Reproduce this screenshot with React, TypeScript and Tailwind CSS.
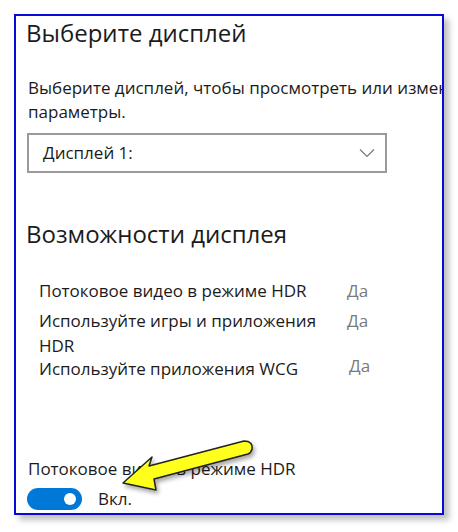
export default function App() {
  return (
    <div className="w-[458px] h-[532px] bg-white relative" style={{ fontFamily: '"Open Sans", "Noto Sans", sans-serif' }}>
      <div className="absolute left-[14px] top-[14px] w-[430px] h-[501px] border-[2.5px] border-[#0a0ad8] bg-white overflow-hidden shadow-[5px_5px_6px_rgba(0,0,0,0.25)]">
        <div className="flex flex-col pl-[10px] text-[#1b1b1b] whitespace-nowrap">
          <h1 className="text-[24px] leading-[32px] mt-[1px]">Выберите дисплей</h1>
          <p className="text-[17px] leading-[24px] mt-[27px] ml-[2px]">
            Выберите дисплей, чтобы просмотреть или изменить
            <br />
            параметры.
          </p>
          <div className="mt-[9px] ml-[1px] w-[360px] h-[40px] border-2 border-[#9a9a9a] flex items-center justify-between pl-[14px] pr-[10px]">
            <span className="text-[17px] leading-[24px]">Дисплей 1:</span>
            <svg width="16" height="10" viewBox="0 0 16 10" fill="none" stroke="#777" strokeWidth="1.2">
              <path d="M1 1.5 L8 8.5 L15 1.5" />
            </svg>
          </div>
          <h2 className="text-[24px] leading-[32px] mt-[45px]">Возможности дисплея</h2>
          <div className="mt-[28px] ml-[13px] flex flex-col text-[17px] leading-[25px]">
            <div className="flex">
              <span className="w-[308px]">Потоковое видео в режиме HDR</span>
              <span className="text-[#7a7a7a]">Да</span>
            </div>
            <div className="flex mt-[5px]">
              <span className="w-[308px]">
                Используйте игры и приложения
                <br />
                HDR
              </span>
              <span className="text-[#7a7a7a]">Да</span>
            </div>
            <div className="flex -mt-[2px]">
              <span className="w-[310px]">Используйте приложения WCG</span>
              <span className="text-[#7a7a7a] -mt-[3px]">Да</span>
            </div>
          </div>
          <p className="text-[17px] leading-[24px] mt-[76px] ml-[2px]">Потоковое видео в режиме HDR</p>
          <div className="flex items-center gap-[16px] mt-[6px] ml-[1px]">
            <div className="w-[55px] h-[22px] rounded-full bg-[#0078d7] flex items-center justify-end pr-[6px]">
              <div className="w-[12px] h-[12px] rounded-full bg-white" />
            </div>
            <span className="text-[17px] leading-[24px]">Вкл.</span>
          </div>
        </div>
      </div>
      <svg className="absolute left-0 top-0" width="458" height="532" viewBox="0 0 458 532">
        <defs>
          <filter id="sh" x="-20%" y="-20%" width="140%" height="160%">
            <feDropShadow dx="2" dy="3" stdDeviation="2" floodColor="#000" floodOpacity="0.35" />
          </filter>
        </defs>
        <path
          d="M123 483 L152 457 L149 466 L244 441 Q253 441 252 449 Q251 453 248 454 L154 479 L156 490 Z"
          fill="#ffff1a"
          stroke="#222"
          strokeWidth="1.5"
          strokeLinejoin="round"
          filter="url(#sh)"
        />
      </svg>
    </div>
  );
}
